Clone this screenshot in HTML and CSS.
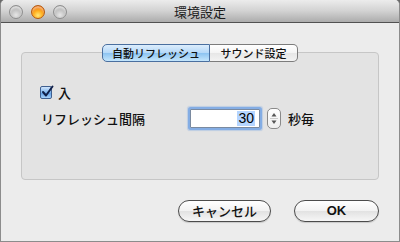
FILE: index.html
```html
<!DOCTYPE html>
<html lang="ja">
<head>
<meta charset="utf-8">
<link rel="stylesheet" href="styles.css">
</head>
<body>
<div class="window">
  <div class="titlebar">
    <div class="lights">
      <span class="light gray"></span>
      <span class="light orange"></span>
      <span class="light gray"></span>
    </div>
    <div class="title">環境設定</div>
  </div>
  <div class="content">
    <div class="tabbox">
      <div class="tabs">
        <div class="tab selected">自動リフレッシュ</div>
        <div class="tab">サウンド設定</div>
      </div>
      <div class="check-row">
        <span class="checkbox">
          <svg width="14" height="14" viewBox="0 0 14 14"><path d="M3 7 L6 10.5 L12.5 1.5" fill="none" stroke="#10204a" stroke-width="2" stroke-linecap="round" stroke-linejoin="round"/></svg>
        </span>
        <span class="check-label">入</span>
      </div>
      <div class="interval-row">
        <span class="interval-label">リフレッシュ間隔</span>
        <span class="field"><span class="sel">30</span></span>
        <span class="stepper">
          <svg width="14" height="21" viewBox="0 0 14 21"><path d="M7 5 L9.5 8.5 L4.5 8.5 Z" fill="#555"/><path d="M7 16 L9.5 12.5 L4.5 12.5 Z" fill="#555"/><line x1="3" y1="10.5" x2="11" y2="10.5" stroke="#ccc" stroke-width="1"/></svg>
        </span>
        <span class="unit">秒毎</span>
      </div>
    </div>
    <div class="buttons">
      <button class="btn cancel">キャンセル</button>
      <button class="btn ok">OK</button>
    </div>
  </div>
</div>
</body>
</html>
```
FILE: styles.css
```css
html, body {
  margin: 0;
  padding: 0;
  background: #6a6a6a;
}
body {
  width: 400px;
  height: 242px;
  overflow: hidden;
  font-family: "Liberation Sans", "Noto Sans CJK JP", sans-serif;
}
.window {
  width: 398px;
  height: 241px;
  background: #ececec;
  border: 1px solid #8c8c8c;
  border-top: none;
  border-radius: 5px 5px 0 0;
  overflow: hidden;
}
.titlebar {
  height: 22px;
  background: linear-gradient(#ececec, #d2d2d2 50%, #acacac);
  border-bottom: 1px solid #515151;
  display: flex;
  align-items: center;
  position: relative;
}
.lights {
  display: flex;
  gap: 8px;
  padding-left: 8px;
  padding-top: 1px;
}
.light {
  width: 14px;
  height: 14px;
  border-radius: 50%;
  box-sizing: border-box;
}
.light.gray {
  background: radial-gradient(circle at 50% 75%, #e6e6e6 0%, #c4c4c4 45%, #a2a2a2 100%);
  border: 1px solid #8e8e8e;
  box-shadow: inset 0 2px 2px rgba(255,255,255,0.6);
}
.light.orange {
  background: radial-gradient(circle at 50% 78%, #ffe87a 0%, #ffb020 40%, #e85f00 85%, #c04a00 100%);
  border: 1px solid #b45a10;
  box-shadow: inset 0 2px 2px rgba(255,255,255,0.5);
}
.title {
  position: absolute;
  left: 0;
  right: 0;
  top: 0;
  text-align: center;
  font-size: 13px;
  line-height: 24px;
  color: #1a1a1a;
  font-family: "Noto Sans CJK JP", sans-serif;
}
.content {
  padding: 29px 20px 0 20px;
}
.tabbox {
  height: 126px;
  background: #e3e3e3;
  border: 1px solid #c6c6c6;
  border-radius: 4px;
  padding-left: 18px;
}
.tabs {
  display: flex;
  justify-content: center;
  margin-top: -9px;
  margin-left: -18px;
}
.tab {
  height: 18px;
  box-sizing: border-box;
  font-size: 11px;
  font-weight: 500;
  line-height: 16px;
  color: #111;
  text-align: center;
  font-family: "Noto Sans CJK JP", sans-serif;
  border: 1px solid #7c7c7c;
  background: linear-gradient(#ffffff, #f4f4f4 50%, #e6e6e6 51%, #f3f3f3);
}
.tab.selected {
  width: 108px;
  border-color: #4a6f9f;
  border-radius: 5px 0 0 5px;
  background: linear-gradient(#dcedfc, #b4d8f8 50%, #8cc3f1 51%, #c4e6fc);
}
.tab:not(.selected) {
  width: 88px;
  border-left: none;
  border-radius: 0 5px 5px 0;
}
.check-row {
  display: flex;
  align-items: center;
  margin-top: 24px;
  height: 13px;
}
.checkbox {
  width: 12px;
  height: 13px;
  box-sizing: border-box;
  border: 1px solid #3f5f8f;
  border-radius: 2px;
  background: linear-gradient(#cfe4fb, #7fb6ee 50%, #5a9ae4 51%, #a9d3fb);
  display: flex;
  align-items: flex-end;
  justify-content: flex-start;
  overflow: visible;
}
.checkbox svg {
  flex: none;
  margin-left: -1px;
  margin-bottom: -1px;
}
.check-label {
  margin-left: 6px;
  font-size: 13px;
  font-weight: 500;
  line-height: 13px;
  color: #111;
  font-family: "Noto Sans CJK JP", sans-serif;
}
.interval-row {
  display: flex;
  align-items: center;
  margin-top: 10px;
  height: 19px;
  padding-left: 1px;
}
.interval-label {
  width: 149px;
  font-size: 13px;
  font-weight: 500;
  line-height: 16px;
  color: #111;
  font-family: "Noto Sans CJK JP", sans-serif;
}
.field {
  width: 70px;
  height: 19px;
  box-sizing: border-box;
  background: #fff;
  border: 1px solid #7a8aa0;
  box-shadow: 0 0 0 2px #84ade4, 0 0 1px 3px rgba(132,173,228,0.4);
  border-radius: 1px;
  display: flex;
  justify-content: flex-end;
  align-items: center;
  padding-right: 4px;
}
.sel {
  background: #b5d5ff;
  font-size: 14px;
  line-height: 15px;
  color: #000;
  padding: 0 1px;
}
.stepper {
  margin-left: 7px;
  width: 14px;
  height: 21px;
  box-sizing: border-box;
  border: 1px solid #8a8a8a;
  border-radius: 5px;
  background: linear-gradient(#ffffff, #eeeeee);
  display: flex;
  align-items: center;
  justify-content: center;
  overflow: hidden;
}
.stepper svg {
  flex: none;
}
.unit {
  margin-left: 7px;
  font-size: 13px;
  font-weight: 500;
  line-height: 16px;
  color: #111;
  font-family: "Noto Sans CJK JP", sans-serif;
}
.buttons {
  display: flex;
  justify-content: flex-end;
  gap: 23px;
  margin-top: 20px;
}
.btn {
  height: 22px;
  margin: 0;
  padding: 0;
  border: 1px solid #4c4c4c;
  border-radius: 11px;
  background: linear-gradient(#ffffff, #f2f2f2 50%, #e2e2e2 51%, #f6f6f6);
  font-size: 13px;
  line-height: 18px;
  color: #111;
  box-shadow: 0 1px 1px rgba(0,0,0,0.15);
}
.btn.cancel {
  width: 93px;
  font-weight: 500;
  font-family: "Noto Sans CJK JP", sans-serif;
}
.btn.ok {
  width: 85px;
  font-weight: bold;
  font-family: "Liberation Sans", sans-serif;
}
```
